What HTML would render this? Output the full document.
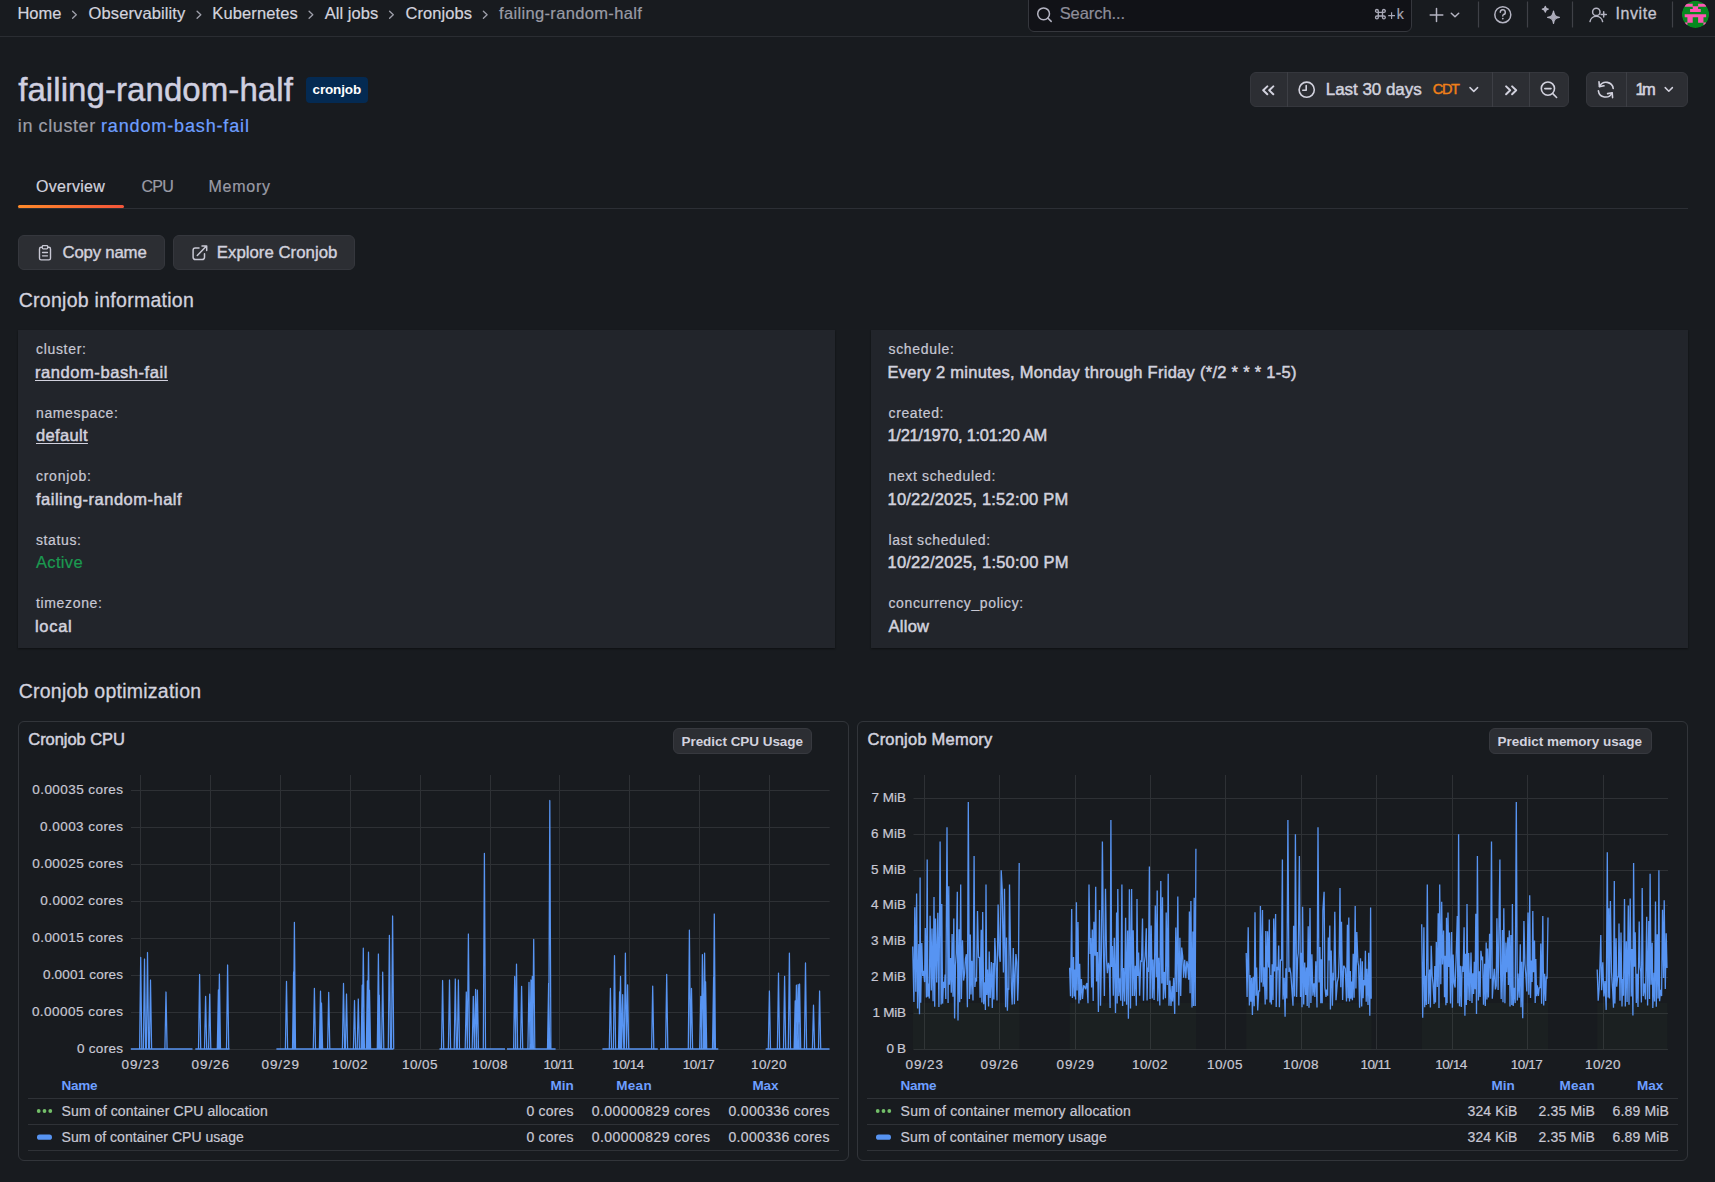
<!DOCTYPE html>
<html><head><meta charset="utf-8"><title>failing-random-half</title>
<style>
html,body{margin:0;padding:0;}
body{width:1715px;height:1182px;overflow:hidden;background:#181b1f;position:relative;font-family:"Liberation Sans",sans-serif;}
.t{position:absolute;white-space:nowrap;line-height:1;}
svg{position:absolute;left:0;top:0;}
</style></head><body>

<div style="position:absolute;left:0;top:36px;width:1715px;height:1px;background:#2a2d32"></div>
<div style="position:absolute;left:1027.5px;top:-6px;width:384px;height:37.5px;box-sizing:border-box;background:#111217;border:1px solid #35373d;border-radius:6px"></div>
<div style="position:absolute;left:306px;top:77px;width:62px;height:26px;background:#042a52;border-radius:4px"></div>
<div style="position:absolute;left:1250px;top:72px;width:319px;height:35px;box-sizing:border-box;background:#2c2e33;border:1px solid #35373d;border-radius:6px"></div>
<div style="position:absolute;left:1287px;top:72px;width:1px;height:35px;background:#3d3f45"></div>
<div style="position:absolute;left:1492px;top:72px;width:1px;height:35px;background:#3d3f45"></div>
<div style="position:absolute;left:1529px;top:72px;width:1px;height:35px;background:#3d3f45"></div>
<div style="position:absolute;left:1586px;top:72px;width:102px;height:35px;box-sizing:border-box;background:#2c2e33;border:1px solid #35373d;border-radius:6px"></div>
<div style="position:absolute;left:1626px;top:72px;width:1px;height:35px;background:#3d3f45"></div>
<div style="position:absolute;left:18px;top:208px;width:1670px;height:1px;background:#2c2f35"></div>
<div style="position:absolute;left:18px;top:204.5px;width:106px;height:3.5px;border-radius:2px;background:linear-gradient(90deg,#ff8a2a,#f4553a)"></div>
<div style="position:absolute;left:18px;top:235px;width:147px;height:35px;box-sizing:border-box;background:#2c2e33;border:1px solid #35373d;border-radius:6px"></div>
<div style="position:absolute;left:173px;top:235px;width:182px;height:35px;box-sizing:border-box;background:#2c2e33;border:1px solid #35373d;border-radius:6px"></div>
<div style="position:absolute;left:18px;top:330px;width:817px;height:318px;background:#22252b;box-shadow:0 1px 2px rgba(0,0,0,0.45)"></div>
<div style="position:absolute;left:871px;top:330px;width:817px;height:318px;background:#22252b;box-shadow:0 1px 2px rgba(0,0,0,0.45)"></div>
<div style="position:absolute;left:18px;top:721px;width:831px;height:440px;box-sizing:border-box;border:1px solid #32353a;border-radius:6px"></div>
<div style="position:absolute;left:857px;top:721px;width:831px;height:440px;box-sizing:border-box;border:1px solid #32353a;border-radius:6px"></div>
<div style="position:absolute;left:673px;top:728px;width:139px;height:26px;box-sizing:border-box;background:#2c2e33;border:1px solid #37393f;border-radius:6px"></div>
<div style="position:absolute;left:1489px;top:728px;width:163px;height:26px;box-sizing:border-box;background:#2c2e33;border:1px solid #37393f;border-radius:6px"></div>

<svg width="1715" height="1182" viewBox="0 0 1715 1182"><g stroke="#2e3135" stroke-width="1"><line x1="131" y1="790.5" x2="829.7" y2="790.5" /><line x1="131" y1="827.5" x2="829.7" y2="827.5" /><line x1="131" y1="864.5" x2="829.7" y2="864.5" /><line x1="131" y1="901.5" x2="829.7" y2="901.5" /><line x1="131" y1="938.5" x2="829.7" y2="938.5" /><line x1="131" y1="975.5" x2="829.7" y2="975.5" /><line x1="131" y1="1012.5" x2="829.7" y2="1012.5" /><line x1="131" y1="1049.5" x2="829.7" y2="1049.5" /><line x1="140.5" y1="775" x2="140.5" y2="1049.5" /><line x1="210.5" y1="775" x2="210.5" y2="1049.5" /><line x1="280.5" y1="775" x2="280.5" y2="1049.5" /><line x1="350.5" y1="775" x2="350.5" y2="1049.5" /><line x1="420.5" y1="775" x2="420.5" y2="1049.5" /><line x1="490.5" y1="775" x2="490.5" y2="1049.5" /><line x1="559.5" y1="775" x2="559.5" y2="1049.5" /><line x1="629.5" y1="775" x2="629.5" y2="1049.5" /><line x1="699.5" y1="775" x2="699.5" y2="1049.5" /><line x1="769.5" y1="775" x2="769.5" y2="1049.5" /></g><path d="M130.8,1049H192.5M195.3,1049H229.5M276.4,1049H393.5M439.5,1049H505M507,1049H555.6M602.4,1049H657.8M660,1049H718.3M765.7,1049H829.5" stroke="#5794f2" stroke-width="1.6" fill="none"/><path d="M139.6,1049L140.7,957.4L141.8,1049M143.4,1049L144.5,959L145.6,1049M146.4,1049L147.5,952.5L148.6,1049M149.4,1049L150.5,980L151.6,1049M164.9,1049L166.0,992L167.1,1049M198.5,1049L199.6,974.5L200.7,1049M204.5,1049L205.6,996.4L206.7,1049M208.6,1049L209.7,994.2L210.8,1049M217.3,1049L218.4,990L219.5,1049M218.3,1049L219.4,974.2L220.5,1049M226.5,1049L227.6,965L228.7,1049M285.4,1049L286.5,981.3L287.6,1049M292.5,1049L293.6,972L294.7,1049M293.3,1049L294.4,922.3L295.5,1049M313.3,1049L314.4,988.4L315.5,1049M319.4,1049L320.5,991.2L321.6,1049M320.4,1049L321.5,1003L322.6,1049M327.6,1049L328.7,992.3L329.8,1049M342.4,1049L343.5,983.4L344.6,1049M345.4,1049L346.5,994L347.6,1049M353.4,1049L354.5,1000.5L355.6,1049M357.2,1049L358.3,999L359.4,1049M361.1,1049L362.2,985.2L363.3,1049M362.2,1049L363.3,948.2L364.4,1049M366.3,1049L367.4,981L368.5,1049M367.4,1049L368.5,952.2L369.6,1049M368.4,1049L369.5,990L370.6,1049M377.3,1049L378.4,954L379.5,1049M378.2,1049L379.3,995L380.4,1049M381.6,1049L382.7,972.2L383.8,1049M388.3,1049L389.4,935.3L390.5,1049M391.5,1049L392.6,916L393.7,1049M441.5,1049L442.6,980.5L443.7,1049M448.4,1049L449.5,980L450.6,1049M454.2,1049L455.3,979L456.4,1049M457.3,1049L458.4,980L459.5,1049M465.2,1049L466.3,992L467.4,1049M467.3,1049L468.4,934L469.5,1049M472.2,1049L473.3,996.3L474.4,1049M474.5,1049L475.6,989.3L476.7,1049M476.3,1049L477.4,990.2L478.5,1049M483.3,1049L484.4,853.3L485.5,1049M513.6,1049L514.7,976.5L515.8,1049M515.4,1049L516.5,964.2L517.6,1049M520.5,1049L521.6,986.3L522.7,1049M527.9,1049L529.0,982.3L530.1,1049M529.9,1049L531.0,980L532.1,1049M531.2,1049L532.3,976.5L533.4,1049M532.6,1049L533.7,939.3L534.8,1049M547.5,1049L548.6,983.5L549.7,1049M548.7,1049L549.8,800.5L550.9,1049M609.3,1049L610.4,988.4L611.5,1049M613.4,1049L614.5,955.6L615.6,1049M618.5,1049L619.6,992L620.7,1049M619.4,1049L620.5,976.3L621.6,1049M621.6,1049L622.7,994.7L623.8,1049M624.3,1049L625.4,953.1L626.5,1049M626.5,1049L627.6,984.8L628.7,1049M651.6,1049L652.7,986.2L653.8,1049M665.6,1049L666.7,974.3L667.8,1049M688.3,1049L689.4,930.1L690.5,1049M690.4,1049L691.5,988.4L692.6,1049M699.7,1049L700.8,996.4L701.9,1049M701.3,1049L702.4,954.6L703.5,1049M703.5,1049L704.6,953.1L705.7,1049M704.5,1049L705.6,981.8L706.7,1049M712.5,1049L713.6,977.5L714.7,1049M713.2,1049L714.3,914L715.4,1049M768.3,1049L769.4,991L770.5,1049M777.4,1049L778.5,973.1L779.6,1049M783.5,1049L784.6,976.3L785.7,1049M788.3,1049L789.4,953.1L790.5,1049M794.1,1049L795.2,1000.8L796.3,1049M795.3,1049L796.4,985.2L797.5,1049M797.1,1049L798.2,984.5L799.3,1049M798.5,1049L799.6,984L800.7,1049M804.4,1049L805.5,962.9L806.6,1049M812.4,1049L813.5,1005.2L814.6,1049M818.5,1049L819.6,991L820.7,1049" stroke="#5794f2" stroke-width="1.25" fill="none" stroke-linejoin="round"/><g stroke="#2e3135" stroke-width="1"><line x1="913.5" y1="798.5" x2="1668" y2="798.5" /><line x1="913.5" y1="834.5" x2="1668" y2="834.5" /><line x1="913.5" y1="870.5" x2="1668" y2="870.5" /><line x1="913.5" y1="905.5" x2="1668" y2="905.5" /><line x1="913.5" y1="941.5" x2="1668" y2="941.5" /><line x1="913.5" y1="977.5" x2="1668" y2="977.5" /><line x1="913.5" y1="1013.5" x2="1668" y2="1013.5" /><line x1="913.5" y1="1049.5" x2="1668" y2="1049.5" /><line x1="924.5" y1="775" x2="924.5" y2="1049.5" /><line x1="999.5" y1="775" x2="999.5" y2="1049.5" /><line x1="1075.5" y1="775" x2="1075.5" y2="1049.5" /><line x1="1150.5" y1="775" x2="1150.5" y2="1049.5" /><line x1="1225.5" y1="775" x2="1225.5" y2="1049.5" /><line x1="1301.5" y1="775" x2="1301.5" y2="1049.5" /><line x1="1376.5" y1="775" x2="1376.5" y2="1049.5" /><line x1="1452.5" y1="775" x2="1452.5" y2="1049.5" /><line x1="1527.5" y1="775" x2="1527.5" y2="1049.5" /><line x1="1603.5" y1="775" x2="1603.5" y2="1049.5" /></g><rect x="912.7" y="1002.9" width="106.8" height="46.6" fill="#73bf69" fill-opacity="0.03"/><rect x="1069.6" y="1002.9" width="126.4" height="46.6" fill="#73bf69" fill-opacity="0.03"/><rect x="1246.2" y="1002.9" width="125.3" height="46.6" fill="#73bf69" fill-opacity="0.03"/><rect x="1421.7" y="1002.9" width="126.3" height="46.6" fill="#73bf69" fill-opacity="0.03"/><rect x="1597.2" y="1002.9" width="70.2" height="46.6" fill="#73bf69" fill-opacity="0.03"/><path d="M912.7,946.5L913.9,1001.9L914.8,907.3L915.8,991.7L916.6,893.4L917.6,1008.5L918.8,944.1L919.5,1014.2L920.1,877.4L920.7,1002.7L921.8,943.1L922.7,976.0L923.5,970.7L924.6,982.1L925.3,927.9L926.4,997.6L927.2,859.4L927.8,996.8L928.7,983.6L929.3,998.5L930.1,915.7L931.3,990.6L932.0,928.4L933.1,1001.2L934.0,897.0L934.7,1006.8L935.5,918.6L936.7,982.6L937.8,912.8L938.9,1007.0L940.1,841.5L941.2,1004.5L941.8,904.0L942.6,1003.6L943.5,981.7L944.4,987.8L945.1,974.5L945.8,999.0L947.0,827.2L948.1,1003.0L948.8,886.3L949.5,984.7L950.6,958.0L951.3,992.8L952.1,933.9L953.0,996.7L953.8,918.6L954.6,1018.6L955.5,964.9L956.3,953.5L957.3,891.7L958.0,1020.6L959.1,929.2L959.7,1002.2L960.7,884.6L961.4,999.0L962.5,940.3L963.6,980.6L964.6,973.4L965.5,958.6L966.4,954.2L967.4,1007.3L968.3,802.1L969.4,999.0L970.3,934.5L971.0,994.4L971.9,960.7L973.0,1000.5L974.1,855.9L974.9,987.0L975.6,977.9L976.5,981.6L977.5,911.1L978.5,957.8L979.4,957.0L980.1,997.8L981.2,929.7L981.9,1002.6L982.7,911.9L983.7,1004.3L984.8,982.4L985.4,1009.9L986.0,884.5L986.8,994.9L987.5,969.5L988.6,1006.5L989.2,951.4L990.2,998.1L991.4,962.0L992.3,1008.1L993.2,962.9L993.9,999.5L994.8,938.1L995.7,956.7L996.3,976.6L997.0,1000.4L998.1,904.6L999.3,955.1L1000.2,961.8L1001.2,870.2L1002.2,889.2L1003.4,972.6L1004.5,888.7L1005.6,1007.2L1006.5,937.5L1007.4,1010.7L1008.0,988.4L1008.8,989.7L1009.5,884.5L1010.6,955.0L1011.5,990.3L1012.2,1004.6L1013.3,948.1L1014.4,1004.3L1015.2,972.7L1015.9,954.0L1016.8,962.0L1017.7,1000.7L1018.4,981.0L1019.2,863.0 M1069.6,967.8L1070.5,996.3L1071.7,909.1L1072.4,998.0L1073.5,957.0L1074.2,996.6L1074.9,969.6L1075.6,999.6L1076.4,902.3L1077.1,990.4L1078.0,921.9L1078.9,1003.5L1079.7,963.7L1080.5,1000.2L1081.4,979.0L1082.5,999.0L1083.6,985.3L1084.4,986.3L1085.6,989.2L1086.3,984.5L1087.0,983.1L1088.0,1003.2L1089.0,884.5L1090.1,954.0L1090.7,938.0L1091.6,987.6L1092.3,929.4L1093.2,1001.1L1093.9,921.7L1095.0,955.8L1095.7,886.8L1096.5,981.6L1097.4,952.1L1098.4,1012.0L1099.5,910.0L1100.5,1005.8L1101.2,969.9L1102.4,841.5L1103.5,953.2L1104.4,995.9L1105.5,888.7L1106.6,960.7L1107.4,973.2L1108.4,962.8L1109.3,967.6L1110.1,1008.1L1110.9,820.0L1111.6,967.0L1112.4,946.1L1113.3,995.7L1114.3,937.8L1115.5,1013.1L1116.6,912.4L1117.2,1003.5L1117.8,888.9L1118.8,996.1L1119.7,978.4L1120.8,1000.8L1121.9,884.5L1122.6,1006.1L1123.5,968.1L1124.6,1001.6L1125.6,917.8L1126.6,1004.7L1127.6,930.5L1128.4,1018.8L1129.4,889.3L1130.5,1008.4L1131.6,888.9L1132.5,996.0L1133.2,930.3L1134.3,996.0L1135.3,965.7L1136.3,1005.7L1137.0,898.9L1137.8,976.1L1138.6,952.6L1139.6,995.7L1140.8,960.3L1141.5,962.0L1142.5,918.5L1143.5,1000.8L1144.4,962.4L1145.2,956.3L1146.3,928.3L1147.1,1000.4L1147.7,967.5L1148.4,972.0L1149.4,866.6L1150.1,998.9L1151.2,925.6L1152.3,998.6L1153.0,959.5L1154.1,1000.1L1155.3,905.6L1156.3,977.3L1157.2,890.4L1157.8,1001.2L1158.7,957.7L1159.8,1005.6L1160.8,881.0L1161.8,983.5L1162.5,897.3L1163.3,999.4L1164.3,971.9L1165.4,998.2L1166.2,912.5L1167.3,985.0L1168.2,873.8L1169.0,1005.8L1169.9,980.5L1171.0,1006.0L1172.1,986.1L1172.7,1001.4L1173.6,978.1L1174.7,1013.9L1175.8,927.4L1176.8,992.1L1177.8,896.4L1178.8,1005.5L1179.9,937.7L1180.7,996.1L1181.7,947.5L1182.7,956.3L1183.6,977.8L1184.7,959.8L1185.8,978.3L1186.8,961.2L1187.6,964.3L1188.7,979.6L1189.4,911.4L1190.1,993.2L1190.9,901.0L1192.0,1007.5L1192.9,931.5L1193.5,1005.9L1194.2,897.7L1195.2,1005.9L1195.9,848.7 M1246.2,953.0L1247.1,997.1L1248.2,927.2L1249.4,1005.5L1250.0,974.9L1250.9,1001.8L1251.6,978.0L1252.4,1014.9L1253.2,976.8L1254.2,1006.3L1255.0,912.2L1255.9,995.8L1256.6,967.4L1257.7,1010.5L1258.8,990.4L1259.6,991.5L1260.4,906.1L1261.4,982.6L1262.5,909.9L1263.1,986.7L1264.1,967.2L1265.2,1004.4L1265.8,930.9L1266.8,999.6L1267.5,931.2L1268.7,967.6L1269.3,919.6L1270.0,1002.5L1270.6,974.9L1271.4,1004.6L1272.2,964.2L1273.0,999.9L1273.7,918.6L1274.5,971.5L1275.6,914.1L1276.2,1007.1L1277.2,966.7L1278.1,970.2L1278.7,945.4L1279.4,1007.3L1280.5,959.6L1281.5,960.4L1282.4,859.4L1283.0,999.5L1284.2,977.9L1285.1,1016.7L1285.9,968.3L1286.8,998.4L1287.9,820.0L1288.9,972.1L1289.7,967.6L1290.8,973.5L1291.8,987.9L1293.0,1005.8L1293.6,925.8L1294.6,996.6L1295.4,834.3L1296.6,996.9L1297.6,958.6L1298.3,953.0L1299.4,855.9L1300.5,997.0L1301.2,952.7L1302.0,1007.3L1302.6,906.7L1303.7,1004.4L1304.7,962.4L1305.7,995.0L1306.4,967.5L1307.2,1006.1L1308.2,926.2L1309.0,1007.8L1310.0,908.0L1310.9,1003.1L1311.9,954.3L1312.9,995.8L1314.0,983.3L1314.9,996.9L1315.8,961.3L1317.0,1007.6L1318.0,827.2L1319.0,982.6L1319.9,946.9L1320.8,1003.3L1321.4,959.3L1322.2,1003.3L1322.9,910.2L1324.1,891.7L1324.9,987.4L1326.0,996.9L1326.6,989.5L1327.6,995.7L1328.3,937.5L1328.9,960.6L1329.8,925.4L1330.4,1009.5L1331.2,950.5L1332.4,1005.7L1333.2,972.8L1333.9,980.5L1334.8,911.7L1336.0,1000.3L1336.7,991.0L1337.3,982.2L1338.5,976.8L1339.2,955.4L1340.0,888.1L1340.8,987.3L1341.5,921.7L1342.6,1000.0L1343.7,965.7L1344.5,967.0L1345.3,968.7L1346.5,1001.6L1347.4,924.7L1348.1,998.2L1348.8,917.4L1349.5,1001.4L1350.3,970.9L1350.9,998.8L1351.7,981.4L1352.4,1000.2L1353.2,953.8L1354.1,997.7L1355.2,906.1L1355.9,988.6L1356.8,932.1L1357.9,961.7L1358.6,965.8L1359.6,1007.8L1360.5,958.3L1361.7,1006.4L1362.3,961.3L1363.1,998.2L1363.8,979.9L1364.7,985.5L1365.4,950.7L1366.2,1001.7L1366.9,968.7L1368.0,1005.1L1368.7,952.7L1369.8,1015.7L1370.6,907.4L1371.2,998.7 M1421.7,924.3L1422.7,1017.8L1423.9,927.2L1424.7,1007.3L1425.3,975.7L1426.3,1005.1L1427.3,884.5L1428.4,1004.0L1429.6,969.5L1430.4,1007.5L1431.2,945.8L1432.2,975.8L1433.0,983.9L1434.1,1003.9L1434.8,965.9L1435.5,1002.4L1436.3,942.1L1437.3,986.9L1438.2,913.3L1439.0,1008.0L1439.7,884.5L1440.8,984.2L1441.7,901.8L1442.5,964.6L1443.6,930.5L1444.5,997.2L1445.2,955.7L1445.9,1005.3L1446.5,917.8L1447.1,1002.9L1448.0,912.6L1448.8,967.0L1449.5,932.4L1450.5,1003.4L1451.6,931.9L1452.4,1007.8L1453.1,954.4L1454.1,982.9L1455.1,987.5L1456.2,954.6L1457.3,916.0L1457.9,1003.3L1458.6,834.3L1459.5,1006.3L1460.3,965.8L1461.3,1007.1L1462.1,966.3L1463.1,971.9L1464.1,927.3L1464.9,1015.7L1465.5,953.8L1466.4,1005.1L1467.0,903.9L1468.0,999.9L1468.7,953.0L1469.9,1001.0L1471.0,952.6L1472.0,1003.0L1472.8,973.2L1473.6,994.1L1474.3,961.8L1475.1,989.3L1475.8,913.8L1476.5,1014.0L1477.4,855.9L1478.4,1000.4L1479.3,971.3L1480.1,997.1L1480.9,950.7L1481.9,960.2L1482.6,956.5L1483.5,1004.7L1484.6,963.8L1485.3,1006.0L1486.2,942.6L1486.9,999.4L1487.6,948.5L1488.4,997.4L1489.6,933.7L1490.5,978.8L1491.5,841.5L1492.3,998.7L1493.4,979.9L1494.3,968.9L1495.4,989.4L1496.2,985.8L1496.9,918.2L1498.1,990.0L1499.1,916.1L1499.9,859.4L1500.5,967.2L1501.2,999.1L1502.4,930.1L1503.0,1002.2L1503.8,908.2L1504.9,1003.3L1505.9,942.5L1506.7,972.2L1507.8,937.3L1508.4,984.9L1509.3,930.4L1510.0,1006.5L1510.9,934.9L1511.8,1005.0L1512.4,903.9L1513.2,1006.0L1514.1,987.8L1515.2,1003.1L1516.3,802.1L1517.3,1000.4L1518.0,973.5L1519.2,997.8L1520.3,944.3L1521.0,1007.3L1521.8,961.7L1522.7,1018.2L1523.9,920.9L1524.9,964.1L1525.8,974.3L1526.8,991.4L1528.0,912.6L1528.8,994.7L1529.7,895.3L1530.5,998.1L1531.4,960.5L1532.1,981.9L1532.8,910.9L1533.5,972.2L1534.5,940.6L1535.2,1002.9L1535.8,959.0L1536.6,996.3L1537.3,985.2L1538.4,995.9L1539.2,987.4L1540.1,988.1L1540.8,943.4L1541.6,1003.8L1542.8,915.9L1543.7,1005.6L1544.6,973.7L1545.6,1001.1L1546.3,977.3L1547.1,977.7L1548.0,917.5 M1597.2,969.5L1598.2,1000.8L1599.1,988.9L1600.0,964.0L1600.8,935.1L1601.6,990.3L1602.8,962.2L1603.9,996.5L1605.0,981.1L1606.2,1009.9L1607.3,852.3L1608.1,997.4L1608.9,908.3L1609.5,998.4L1610.4,901.0L1611.5,972.1L1612.6,988.9L1613.5,1007.8L1614.3,881.0L1614.9,1003.4L1616.1,938.3L1616.7,986.8L1617.7,976.5L1618.4,977.2L1619.0,923.6L1620.0,1000.7L1621.0,932.4L1622.0,1006.6L1622.7,979.0L1623.5,995.8L1624.5,898.9L1625.3,1006.4L1626.3,941.2L1627.1,1001.9L1628.3,905.5L1629.0,1004.7L1630.2,898.5L1631.2,996.5L1632.0,949.0L1632.9,1015.6L1633.6,863.0L1634.4,966.8L1635.2,932.2L1636.3,1003.0L1637.1,973.8L1638.0,1007.0L1639.2,921.4L1640.0,966.9L1640.8,971.7L1641.4,1002.4L1642.2,888.1L1643.3,996.1L1644.4,983.6L1645.5,999.5L1646.7,916.8L1647.6,1005.5L1648.8,921.1L1649.5,999.0L1650.1,873.8L1651.1,984.8L1652.2,942.8L1652.8,1008.1L1654.0,972.8L1654.6,1001.5L1655.5,901.5L1656.3,1006.7L1657.2,934.2L1658.1,998.5L1658.9,870.2L1659.6,1001.3L1660.5,989.9L1661.6,996.1L1662.5,909.8L1663.6,977.9L1664.2,900.2L1665.3,989.0L1666.2,933.2L1667.0,968.0" stroke="#5794f2" stroke-width="1.3" fill="none" stroke-linejoin="miter" stroke-miterlimit="2"/><clipPath id="avc"><circle cx="1695.5" cy="14.4" r="13.6"/></clipPath><g clip-path="url(#avc)"><circle cx="1695.5" cy="14.4" r="13.6" fill="#06891f"/><path fill="#ff55b4" d="M1684.70,3.65h8.04v2.98h-8.04zM1698.10,3.65h8.04v2.98h-8.04zM1692.74,6.33h5.36v2.98h-5.36zM1690.06,9.01h10.72v2.98h-10.72zM1684.70,14.37h21.44v2.98h-21.44zM1687.38,17.05h5.36v2.98h-5.36zM1698.10,17.05h5.36v2.98h-5.36zM1687.38,19.73h5.36v2.98h-5.36zM1698.10,19.73h5.36v2.98h-5.36zM1684.70,22.41h2.68v2.98h-2.68zM1703.46,22.41h2.68v2.98h-2.68z"/></g><path d="M72.6,11.3 L76.3,14.8 L72.6,18.3" fill="none" stroke="#9d9ea9" stroke-width="1.35" stroke-linecap="round" stroke-linejoin="round"/><path d="M197.1,11.3 L200.8,14.8 L197.1,18.3" fill="none" stroke="#9d9ea9" stroke-width="1.35" stroke-linecap="round" stroke-linejoin="round"/><path d="M309.1,11.3 L312.8,14.8 L309.1,18.3" fill="none" stroke="#9d9ea9" stroke-width="1.35" stroke-linecap="round" stroke-linejoin="round"/><path d="M389.6,11.3 L393.3,14.8 L389.6,18.3" fill="none" stroke="#9d9ea9" stroke-width="1.35" stroke-linecap="round" stroke-linejoin="round"/><path d="M483.40000000000003,11.3 L487.1,14.8 L483.40000000000003,18.3" fill="none" stroke="#9d9ea9" stroke-width="1.35" stroke-linecap="round" stroke-linejoin="round"/><circle cx="1043.6" cy="13.8" r="5.9" fill="none" stroke="#b4b4c2" stroke-width="1.5" stroke-linecap="round" stroke-linejoin="round"/><path d="M1047.9,18.1 L1051.2,21.4" fill="none" stroke="#b4b4c2" stroke-width="1.5" stroke-linecap="round" stroke-linejoin="round"/><g fill="none" stroke="#a8a8b6" stroke-width="1.35"><path d="M1378.3,12.3 H1382.5 M1378.3,16 H1382.5 M1378.3,12.3 V16 M1382.5,12.3 V16"/><path d="M1378.3,12.3 V10.9 A1.4,1.4 0 1 0 1376.9,12.3 Z M1382.5,12.3 V10.9 A1.4,1.4 0 1 1 1383.9,12.3 Z M1378.3,16 V17.4 A1.4,1.4 0 1 1 1376.9,16 Z M1382.5,16 V17.4 A1.4,1.4 0 1 0 1383.9,16 Z"/></g><path d="M1388.2,15.6 H1395 M1391.6,12.2 V19" stroke="#a8a8b6" stroke-width="1.15"/><path d="M1436.5,8.6 V21.4 M1430.2,15 H1442.8" fill="none" stroke="#b4b4c2" stroke-width="1.5" stroke-linecap="round" stroke-linejoin="round" stroke-width="1.7"/><path d="M1451.3,13.2 L1455,16.7 L1458.7,13.2" fill="none" stroke="#b4b4c2" stroke-width="1.5" stroke-linecap="round" stroke-linejoin="round"/><line x1="1478.5" y1="1.5" x2="1478.5" y2="27.5" stroke="#3f4147" stroke-width="1.2"/><line x1="1527.5" y1="1.5" x2="1527.5" y2="27.5" stroke="#3f4147" stroke-width="1.2"/><line x1="1572.5" y1="1.5" x2="1572.5" y2="27.5" stroke="#3f4147" stroke-width="1.2"/><line x1="1672.5" y1="1.5" x2="1672.5" y2="27.5" stroke="#3f4147" stroke-width="1.2"/><circle cx="1502.8" cy="14.7" r="8" fill="none" stroke="#b4b4c2" stroke-width="1.5" stroke-linecap="round" stroke-linejoin="round"/><path d="M1500.3,12.2 A2.5,2.5 0 1 1 1503.4,14.6 C1502.9,14.8 1502.8,15.2 1502.8,16" fill="none" stroke="#b4b4c2" stroke-width="1.5" stroke-linecap="round" stroke-linejoin="round" stroke-width="1.4"/><circle cx="1502.8" cy="18.6" r="0.9" fill="#b4b4c2"/><g fill="#a8a8b6" stroke="#b4b4c2" stroke-width="1.2" stroke-linejoin="round"><path d="M1553.5,11.2 C1554.1,15.3 1555.4,16.7 1559.4,17.3 C1555.4,17.9 1554.1,19.3 1553.5,23.5 C1552.9,19.3 1551.6,17.9 1547.6,17.3 C1551.6,16.7 1552.9,15.3 1553.5,11.2Z"/><path d="M1545.3,6.3 C1545.6,8.2 1546.2,8.9 1548.3,9.2 C1546.2,9.5 1545.6,10.2 1545.3,12.2 C1545,10.2 1544.4,9.5 1542.3,9.2 C1544.4,8.9 1545,8.2 1545.3,6.3Z"/></g><circle cx="1596.3" cy="11.9" r="3.7" fill="none" stroke="#b4b4c2" stroke-width="1.5" stroke-linecap="round" stroke-linejoin="round"/><path d="M1590,21.6 A6.4,6.4 0 0 1 1602.6,21.6" fill="none" stroke="#b4b4c2" stroke-width="1.5" stroke-linecap="round" stroke-linejoin="round"/><path d="M1603.7,11.8 V17 M1601.1,14.4 H1606.3" fill="none" stroke="#b4b4c2" stroke-width="1.5" stroke-linecap="round" stroke-linejoin="round" stroke-width="1.4"/><path d="M1267.3,86.4 L1263.2,90.3 L1267.3,94.2 M1273.3,86.4 L1269.2,90.3 L1273.3,94.2" fill="none" stroke="#d2d2de" stroke-width="2" stroke-linecap="round" stroke-linejoin="round"/><circle cx="1306.7" cy="89.7" r="7.6" fill="none" stroke="#d2d2de" stroke-width="1.6"/><path d="M1306.2,85.5 V90.3 H1302.8" fill="none" stroke="#d2d2de" stroke-width="1.6" stroke-linecap="round" stroke-linejoin="round"/><path d="M1470,87.6 L1473.8,91.4 L1477.6,87.6" fill="none" stroke="#d2d2de" stroke-width="1.5" stroke-linecap="round" stroke-linejoin="round"/><path d="M1506.1,86.4 L1510.2,90.3 L1506.1,94.2 M1512.1,86.4 L1516.2,90.3 L1512.1,94.2" fill="none" stroke="#d2d2de" stroke-width="2" stroke-linecap="round" stroke-linejoin="round"/><circle cx="1547.9" cy="88.6" r="6.6" fill="none" stroke="#d2d2de" stroke-width="1.6"/><path d="M1544.8,88.6 H1551 M1552.8,93.6 L1556.6,97.5" fill="none" stroke="#d2d2de" stroke-width="1.6" stroke-linecap="round"/><path d="M1613.2,88.5 A7.2,7.2 0 0 0 1599.6,86.3 M1598.4,90.8 A7.2,7.2 0 0 0 1612,93" fill="none" stroke="#d2d2de" stroke-width="1.6" stroke-linecap="round"/><path d="M1599,81.8 L1599.4,86.6 L1604,85.8 M1612.6,97.6 L1612.2,92.8 L1607.6,93.6" fill="none" stroke="#d2d2de" stroke-width="1.6" stroke-linecap="round" stroke-linejoin="round"/><path d="M1665.2,87.6 L1668.8,91.2 L1672.4,87.6" fill="none" stroke="#d2d2de" stroke-width="1.5" stroke-linecap="round" stroke-linejoin="round"/><rect x="39.5" y="247.3" width="11" height="12.6" rx="1.6" fill="none" stroke="#c8c8d4" stroke-width="1.4"/><rect x="42.3" y="245.6" width="5.4" height="3.2" rx="0.8" fill="#2d2f34" stroke="#c8c8d4" stroke-width="1.3"/><path d="M42.5,252.5 H47.5 M42.5,255.8 H47.5" stroke="#c8c8d4" stroke-width="1.3" stroke-linecap="round"/><path d="M199,248.1 H195.3 A2.2,2.2 0 0 0 193.1,250.3 V257.3 A2.2,2.2 0 0 0 195.3,259.5 H202.3 A2.2,2.2 0 0 0 204.5,257.3 V253.8 M197.3,255.5 L206,246.6 M202,245.9 H206.7 V250.6" fill="none" stroke="#c8c8d4" stroke-width="1.5" stroke-linecap="round" stroke-linejoin="round"/><circle cx="38.7" cy="1111" r="1.9" fill="#73bf69"/><circle cx="44.5" cy="1111" r="1.9" fill="#73bf69"/><circle cx="50.3" cy="1111" r="1.9" fill="#73bf69"/><rect x="37" y="1134.6" width="15" height="5.2" rx="2.6" fill="#5794f2"/><circle cx="877.7" cy="1111" r="1.9" fill="#73bf69"/><circle cx="883.5" cy="1111" r="1.9" fill="#73bf69"/><circle cx="889.3" cy="1111" r="1.9" fill="#73bf69"/><rect x="876" y="1134.6" width="15" height="5.2" rx="2.6" fill="#5794f2"/><line x1="28" y1="1098.5" x2="839" y2="1098.5" stroke="#2f3237"/><line x1="867" y1="1098.5" x2="1678" y2="1098.5" stroke="#2f3237"/><line x1="28" y1="1124.5" x2="839" y2="1124.5" stroke="#2f3237"/><line x1="867" y1="1124.5" x2="1678" y2="1124.5" stroke="#2f3237"/><line x1="28" y1="1150.5" x2="839" y2="1150.5" stroke="#2f3237"/><line x1="867" y1="1150.5" x2="1678" y2="1150.5" stroke="#2f3237"/></svg>
<div class="t" style="left:17.40px;top:5.00px;font-size:16.5px;font-weight:400;color:#d3d3de;letter-spacing:-0.012px;-webkit-text-stroke:0.2px #d3d3de;">Home</div><div class="t" style="left:88.60px;top:5.00px;font-size:16.5px;font-weight:400;color:#d3d3de;letter-spacing:0.107px;-webkit-text-stroke:0.2px #d3d3de;">Observability</div><div class="t" style="left:212.30px;top:5.00px;font-size:16.5px;font-weight:400;color:#d3d3de;letter-spacing:0.129px;-webkit-text-stroke:0.2px #d3d3de;">Kubernetes</div><div class="t" style="left:324.80px;top:5.00px;font-size:16.5px;font-weight:400;color:#d3d3de;letter-spacing:0.037px;-webkit-text-stroke:0.2px #d3d3de;">All jobs</div><div class="t" style="left:405.40px;top:5.00px;font-size:16.5px;font-weight:400;color:#d3d3de;letter-spacing:0.074px;-webkit-text-stroke:0.2px #d3d3de;">Cronjobs</div><div class="t" style="left:499.00px;top:5.00px;font-size:16.5px;font-weight:400;color:#9a9ba6;letter-spacing:0.341px;-webkit-text-stroke:0.2px #9a9ba6;">failing-random-half</div><div class="t" style="left:1059.70px;top:5.00px;font-size:16.5px;font-weight:400;color:#8e8e9a;letter-spacing:-0.081px;-webkit-text-stroke:0.2px #8e8e9a;">Search...</div><div class="t" style="left:1396.80px;top:7.00px;font-size:14px;font-weight:400;color:#a8a8b6;-webkit-text-stroke:0.2px #a8a8b6;">k</div><div class="t" style="left:1615.40px;top:6.00px;font-size:16px;font-weight:400;color:#c4c4d0;letter-spacing:0.611px;-webkit-text-stroke:0.3px #c4c4d0;">Invite</div><div class="t" style="left:18.20px;top:73.00px;font-size:33px;font-weight:400;color:#d0d0e0;letter-spacing:0.076px;-webkit-text-stroke:0.45px #d0d0e0;">failing-random-half</div><div class="t" style="left:312.60px;top:83.00px;font-size:13.5px;font-weight:700;color:#ffffff;letter-spacing:-0.159px;">cronjob</div><div class="t" style="left:17.80px;top:117.00px;font-size:18px;font-weight:400;color:#9d9ea8;letter-spacing:0.596px;-webkit-text-stroke:0.2px #9d9ea8;">in cluster</div><div class="t" style="left:100.90px;top:117.00px;font-size:18px;font-weight:400;color:#6e9fff;letter-spacing:0.869px;-webkit-text-stroke:0.2px #6e9fff;">random-bash-fail</div><div class="t" style="left:1325.80px;top:81.00px;font-size:17px;font-weight:400;color:#d2d2de;letter-spacing:-0.045px;-webkit-text-stroke:0.45px #d2d2de;">Last 30 days</div><div class="t" style="left:1432.80px;top:82.00px;font-size:14.5px;font-weight:400;color:#f08019;letter-spacing:-1.371px;-webkit-text-stroke:0.45px #f08019;">CDT</div><div class="t" style="left:1635.60px;top:81.00px;font-size:16.5px;font-weight:400;color:#d2d2de;-webkit-text-stroke:0.55px #d2d2de;">1</div><div class="t" style="left:1642.00px;top:81.00px;font-size:16.5px;font-weight:400;color:#d2d2de;-webkit-text-stroke:0.55px #d2d2de;">m</div><div class="t" style="left:36.10px;top:179.00px;font-size:16px;font-weight:400;color:#d2d2de;letter-spacing:0.282px;-webkit-text-stroke:0.2px #d2d2de;">Overview</div><div class="t" style="left:141.40px;top:179.00px;font-size:16px;font-weight:400;color:#9a9ba6;letter-spacing:-0.663px;-webkit-text-stroke:0.2px #9a9ba6;">CPU</div><div class="t" style="left:208.50px;top:179.00px;font-size:16px;font-weight:400;color:#9a9ba6;letter-spacing:0.744px;-webkit-text-stroke:0.2px #9a9ba6;">Memory</div><div class="t" style="left:62.50px;top:245.00px;font-size:16.8px;font-weight:400;color:#d2d2de;letter-spacing:-0.198px;-webkit-text-stroke:0.4px #d2d2de;">Copy name</div><div class="t" style="left:216.80px;top:245.00px;font-size:16.8px;font-weight:400;color:#d2d2de;letter-spacing:0.015px;-webkit-text-stroke:0.4px #d2d2de;">Explore Cronjob</div><div class="t" style="left:18.70px;top:291.00px;font-size:19.5px;font-weight:400;color:#d2d2de;letter-spacing:0.277px;-webkit-text-stroke:0.3px #d2d2de;">Cronjob information</div><div class="t" style="left:18.70px;top:682.00px;font-size:19.5px;font-weight:400;color:#d2d2de;letter-spacing:0.247px;-webkit-text-stroke:0.3px #d2d2de;">Cronjob optimization</div><div class="t" style="left:36.00px;top:342.00px;font-size:14px;font-weight:400;color:#c8c8d4;letter-spacing:0.681px;-webkit-text-stroke:0.2px #c8c8d4;">cluster:</div><div class="t" style="left:36.00px;top:406.00px;font-size:14px;font-weight:400;color:#c8c8d4;letter-spacing:0.625px;-webkit-text-stroke:0.2px #c8c8d4;">namespace:</div><div class="t" style="left:36.00px;top:469.00px;font-size:14px;font-weight:400;color:#c8c8d4;letter-spacing:0.726px;-webkit-text-stroke:0.2px #c8c8d4;">cronjob:</div><div class="t" style="left:36.00px;top:533.00px;font-size:14px;font-weight:400;color:#c8c8d4;letter-spacing:0.608px;-webkit-text-stroke:0.2px #c8c8d4;">status:</div><div class="t" style="left:36.00px;top:596.00px;font-size:14px;font-weight:400;color:#c8c8d4;letter-spacing:0.649px;-webkit-text-stroke:0.2px #c8c8d4;">timezone:</div><div class="t" style="left:35.00px;top:364.00px;font-size:16.5px;font-weight:400;color:#d2d2de;letter-spacing:0.571px;text-decoration:underline;text-underline-offset:2px;text-decoration-thickness:1px;-webkit-text-stroke:0.5px #d2d2de;">random-bash-fail</div><div class="t" style="left:36.00px;top:427.00px;font-size:16.5px;font-weight:400;color:#d2d2de;letter-spacing:0.341px;text-decoration:underline;text-underline-offset:2px;text-decoration-thickness:1px;-webkit-text-stroke:0.5px #d2d2de;">default</div><div class="t" style="left:36.00px;top:491.00px;font-size:16.5px;font-weight:400;color:#d2d2de;letter-spacing:0.496px;-webkit-text-stroke:0.5px #d2d2de;">failing-random-half</div><div class="t" style="left:36.00px;top:554.00px;font-size:16.5px;font-weight:400;color:#1b9a50;letter-spacing:0.329px;-webkit-text-stroke:0.2px #1b9a50;">Active</div><div class="t" style="left:35.00px;top:618.00px;font-size:16.5px;font-weight:400;color:#d2d2de;letter-spacing:0.683px;-webkit-text-stroke:0.5px #d2d2de;">local</div><div class="t" style="left:888.50px;top:342.00px;font-size:14px;font-weight:400;color:#c8c8d4;letter-spacing:0.670px;-webkit-text-stroke:0.2px #c8c8d4;">schedule:</div><div class="t" style="left:888.50px;top:406.00px;font-size:14px;font-weight:400;color:#c8c8d4;letter-spacing:0.629px;-webkit-text-stroke:0.2px #c8c8d4;">created:</div><div class="t" style="left:888.50px;top:469.00px;font-size:14px;font-weight:400;color:#c8c8d4;letter-spacing:0.630px;-webkit-text-stroke:0.2px #c8c8d4;">next scheduled:</div><div class="t" style="left:888.50px;top:533.00px;font-size:14px;font-weight:400;color:#c8c8d4;letter-spacing:0.586px;-webkit-text-stroke:0.2px #c8c8d4;">last scheduled:</div><div class="t" style="left:888.50px;top:596.00px;font-size:14px;font-weight:400;color:#c8c8d4;letter-spacing:0.609px;-webkit-text-stroke:0.2px #c8c8d4;">concurrency_policy:</div><div class="t" style="left:887.50px;top:364.00px;font-size:16.5px;font-weight:400;color:#d2d2de;letter-spacing:0.275px;-webkit-text-stroke:0.5px #d2d2de;">Every 2 minutes, Monday through Friday (*/2 * * * 1-5)</div><div class="t" style="left:887.50px;top:427.00px;font-size:16.5px;font-weight:400;color:#d2d2de;letter-spacing:-0.311px;-webkit-text-stroke:0.5px #d2d2de;">1/21/1970, 1:01:20 AM</div><div class="t" style="left:887.50px;top:491.00px;font-size:16.5px;font-weight:400;color:#d2d2de;letter-spacing:0.220px;-webkit-text-stroke:0.5px #d2d2de;">10/22/2025, 1:52:00 PM</div><div class="t" style="left:887.50px;top:554.00px;font-size:16.5px;font-weight:400;color:#d2d2de;letter-spacing:0.229px;-webkit-text-stroke:0.5px #d2d2de;">10/22/2025, 1:50:00 PM</div><div class="t" style="left:888.50px;top:618.00px;font-size:16.5px;font-weight:400;color:#d2d2de;letter-spacing:0.272px;-webkit-text-stroke:0.5px #d2d2de;">Allow</div><div class="t" style="left:28.30px;top:731.00px;font-size:16.5px;font-weight:400;color:#d2d2de;letter-spacing:-0.059px;-webkit-text-stroke:0.5px #d2d2de;">Cronjob CPU</div><div class="t" style="left:867.50px;top:731.00px;font-size:16.5px;font-weight:400;color:#d2d2de;letter-spacing:0.215px;-webkit-text-stroke:0.5px #d2d2de;">Cronjob Memory</div><div class="t" style="left:681.50px;top:735.00px;font-size:13.5px;font-weight:700;color:#d2d2de;letter-spacing:-0.049px;">Predict CPU Usage</div><div class="t" style="left:1497.50px;top:735.00px;font-size:13.5px;font-weight:700;color:#d2d2de;letter-spacing:-0.016px;">Predict memory usage</div><div class="t" style="left:32.30px;top:783.00px;font-size:13.5px;font-weight:400;color:#c8c8d4;letter-spacing:0.432px;-webkit-text-stroke:0.2px #c8c8d4;">0.00035 cores</div><div class="t" style="left:40.10px;top:820.00px;font-size:13.5px;font-weight:400;color:#c8c8d4;letter-spacing:0.445px;-webkit-text-stroke:0.2px #c8c8d4;">0.0003 cores</div><div class="t" style="left:32.30px;top:857.00px;font-size:13.5px;font-weight:400;color:#c8c8d4;letter-spacing:0.432px;-webkit-text-stroke:0.2px #c8c8d4;">0.00025 cores</div><div class="t" style="left:40.30px;top:894.00px;font-size:13.5px;font-weight:400;color:#c8c8d4;letter-spacing:0.427px;-webkit-text-stroke:0.2px #c8c8d4;">0.0002 cores</div><div class="t" style="left:32.30px;top:931.00px;font-size:13.5px;font-weight:400;color:#c8c8d4;letter-spacing:0.432px;-webkit-text-stroke:0.2px #c8c8d4;">0.00015 cores</div><div class="t" style="left:43.00px;top:968.00px;font-size:13.5px;font-weight:400;color:#c8c8d4;letter-spacing:0.182px;-webkit-text-stroke:0.2px #c8c8d4;">0.0001 cores</div><div class="t" style="left:31.90px;top:1005.00px;font-size:13.5px;font-weight:400;color:#c8c8d4;letter-spacing:0.466px;-webkit-text-stroke:0.2px #c8c8d4;">0.00005 cores</div><div class="t" style="left:76.90px;top:1042.00px;font-size:13.5px;font-weight:400;color:#c8c8d4;letter-spacing:0.313px;-webkit-text-stroke:0.2px #c8c8d4;">0 cores</div><div class="t" style="left:121.60px;top:1058.00px;font-size:13.5px;font-weight:400;color:#c8c8d4;letter-spacing:0.881px;-webkit-text-stroke:0.2px #c8c8d4;">09/23</div><div class="t" style="left:191.50px;top:1058.00px;font-size:13.5px;font-weight:400;color:#c8c8d4;letter-spacing:0.931px;-webkit-text-stroke:0.2px #c8c8d4;">09/26</div><div class="t" style="left:261.60px;top:1058.00px;font-size:13.5px;font-weight:400;color:#c8c8d4;letter-spacing:0.881px;-webkit-text-stroke:0.2px #c8c8d4;">09/29</div><div class="t" style="left:332.10px;top:1058.00px;font-size:13.5px;font-weight:400;color:#c8c8d4;letter-spacing:0.381px;-webkit-text-stroke:0.2px #c8c8d4;">10/02</div><div class="t" style="left:402.05px;top:1058.00px;font-size:13.5px;font-weight:400;color:#c8c8d4;letter-spacing:0.406px;-webkit-text-stroke:0.2px #c8c8d4;">10/05</div><div class="t" style="left:472.10px;top:1058.00px;font-size:13.5px;font-weight:400;color:#c8c8d4;letter-spacing:0.381px;-webkit-text-stroke:0.2px #c8c8d4;">10/08</div><div class="t" style="left:543.60px;top:1058.00px;font-size:13.5px;font-weight:400;color:#c8c8d4;letter-spacing:-0.618px;-webkit-text-stroke:0.2px #c8c8d4;">10/11</div><div class="t" style="left:612.20px;top:1058.00px;font-size:13.5px;font-weight:400;color:#c8c8d4;letter-spacing:-0.419px;-webkit-text-stroke:0.2px #c8c8d4;">10/14</div><div class="t" style="left:682.75px;top:1058.00px;font-size:13.5px;font-weight:400;color:#c8c8d4;letter-spacing:-0.444px;-webkit-text-stroke:0.2px #c8c8d4;">10/17</div><div class="t" style="left:750.90px;top:1058.00px;font-size:13.5px;font-weight:400;color:#c8c8d4;letter-spacing:0.481px;-webkit-text-stroke:0.2px #c8c8d4;">10/20</div><div class="t" style="left:871.60px;top:791.00px;font-size:13.5px;font-weight:400;color:#c8c8d4;-webkit-text-stroke:0.2px #c8c8d4;">7 MiB</div><div class="t" style="left:871.10px;top:827.00px;font-size:13.5px;font-weight:400;color:#c8c8d4;letter-spacing:0.124px;-webkit-text-stroke:0.2px #c8c8d4;">6 MiB</div><div class="t" style="left:871.10px;top:863.00px;font-size:13.5px;font-weight:400;color:#c8c8d4;letter-spacing:0.124px;-webkit-text-stroke:0.2px #c8c8d4;">5 MiB</div><div class="t" style="left:871.10px;top:898.00px;font-size:13.5px;font-weight:400;color:#c8c8d4;letter-spacing:0.124px;-webkit-text-stroke:0.2px #c8c8d4;">4 MiB</div><div class="t" style="left:871.10px;top:934.00px;font-size:13.5px;font-weight:400;color:#c8c8d4;letter-spacing:0.124px;-webkit-text-stroke:0.2px #c8c8d4;">3 MiB</div><div class="t" style="left:871.10px;top:970.00px;font-size:13.5px;font-weight:400;color:#c8c8d4;letter-spacing:0.124px;-webkit-text-stroke:0.2px #c8c8d4;">2 MiB</div><div class="t" style="left:872.60px;top:1006.00px;font-size:13.5px;font-weight:400;color:#c8c8d4;letter-spacing:-0.251px;-webkit-text-stroke:0.2px #c8c8d4;">1 MiB</div><div class="t" style="left:886.50px;top:1042.00px;font-size:13.5px;font-weight:400;color:#c8c8d4;letter-spacing:-0.329px;-webkit-text-stroke:0.2px #c8c8d4;">0 B</div><div class="t" style="left:905.60px;top:1058.00px;font-size:13.5px;font-weight:400;color:#c8c8d4;letter-spacing:0.881px;-webkit-text-stroke:0.2px #c8c8d4;">09/23</div><div class="t" style="left:980.50px;top:1058.00px;font-size:13.5px;font-weight:400;color:#c8c8d4;letter-spacing:0.931px;-webkit-text-stroke:0.2px #c8c8d4;">09/26</div><div class="t" style="left:1056.60px;top:1058.00px;font-size:13.5px;font-weight:400;color:#c8c8d4;letter-spacing:0.881px;-webkit-text-stroke:0.2px #c8c8d4;">09/29</div><div class="t" style="left:1132.10px;top:1058.00px;font-size:13.5px;font-weight:400;color:#c8c8d4;letter-spacing:0.381px;-webkit-text-stroke:0.2px #c8c8d4;">10/02</div><div class="t" style="left:1207.05px;top:1058.00px;font-size:13.5px;font-weight:400;color:#c8c8d4;letter-spacing:0.406px;-webkit-text-stroke:0.2px #c8c8d4;">10/05</div><div class="t" style="left:1283.10px;top:1058.00px;font-size:13.5px;font-weight:400;color:#c8c8d4;letter-spacing:0.381px;-webkit-text-stroke:0.2px #c8c8d4;">10/08</div><div class="t" style="left:1360.60px;top:1058.00px;font-size:13.5px;font-weight:400;color:#c8c8d4;letter-spacing:-0.618px;-webkit-text-stroke:0.2px #c8c8d4;">10/11</div><div class="t" style="left:1435.20px;top:1058.00px;font-size:13.5px;font-weight:400;color:#c8c8d4;letter-spacing:-0.419px;-webkit-text-stroke:0.2px #c8c8d4;">10/14</div><div class="t" style="left:1510.75px;top:1058.00px;font-size:13.5px;font-weight:400;color:#c8c8d4;letter-spacing:-0.444px;-webkit-text-stroke:0.2px #c8c8d4;">10/17</div><div class="t" style="left:1584.90px;top:1058.00px;font-size:13.5px;font-weight:400;color:#c8c8d4;letter-spacing:0.481px;-webkit-text-stroke:0.2px #c8c8d4;">10/20</div><div class="t" style="left:61.60px;top:1079.00px;font-size:13.5px;font-weight:700;color:#6e9fff;letter-spacing:-0.287px;">Name</div><div class="t" style="left:550.40px;top:1079.00px;font-size:13.5px;font-weight:700;color:#6e9fff;letter-spacing:0.052px;">Min</div><div class="t" style="left:616.20px;top:1079.00px;font-size:13.5px;font-weight:700;color:#6e9fff;letter-spacing:0.313px;">Mean</div><div class="t" style="left:752.50px;top:1079.00px;font-size:13.5px;font-weight:700;color:#6e9fff;letter-spacing:-0.127px;">Max</div><div class="t" style="left:61.60px;top:1104.00px;font-size:14px;font-weight:400;color:#c8c8d4;letter-spacing:0.125px;-webkit-text-stroke:0.2px #c8c8d4;">Sum of container CPU allocation</div><div class="t" style="left:61.60px;top:1130.00px;font-size:14px;font-weight:400;color:#c8c8d4;letter-spacing:0.035px;-webkit-text-stroke:0.2px #c8c8d4;">Sum of container CPU usage</div><div class="t" style="left:526.40px;top:1104.00px;font-size:14px;font-weight:400;color:#c8c8d4;letter-spacing:0.198px;-webkit-text-stroke:0.2px #c8c8d4;">0 cores</div><div class="t" style="left:591.80px;top:1104.00px;font-size:14px;font-weight:400;color:#c8c8d4;letter-spacing:0.414px;-webkit-text-stroke:0.2px #c8c8d4;">0.00000829 cores</div><div class="t" style="left:728.40px;top:1104.00px;font-size:14px;font-weight:400;color:#c8c8d4;letter-spacing:0.345px;-webkit-text-stroke:0.2px #c8c8d4;">0.000336 cores</div><div class="t" style="left:526.40px;top:1130.00px;font-size:14px;font-weight:400;color:#c8c8d4;letter-spacing:0.198px;-webkit-text-stroke:0.2px #c8c8d4;">0 cores</div><div class="t" style="left:591.80px;top:1130.00px;font-size:14px;font-weight:400;color:#c8c8d4;letter-spacing:0.414px;-webkit-text-stroke:0.2px #c8c8d4;">0.00000829 cores</div><div class="t" style="left:728.40px;top:1130.00px;font-size:14px;font-weight:400;color:#c8c8d4;letter-spacing:0.345px;-webkit-text-stroke:0.2px #c8c8d4;">0.000336 cores</div><div class="t" style="left:900.60px;top:1079.00px;font-size:13.5px;font-weight:700;color:#6e9fff;letter-spacing:-0.287px;">Name</div><div class="t" style="left:1491.40px;top:1079.00px;font-size:13.5px;font-weight:700;color:#6e9fff;letter-spacing:0.052px;">Min</div><div class="t" style="left:1559.40px;top:1079.00px;font-size:13.5px;font-weight:700;color:#6e9fff;letter-spacing:0.279px;">Mean</div><div class="t" style="left:1637.00px;top:1079.00px;font-size:13.5px;font-weight:700;color:#6e9fff;letter-spacing:0.023px;">Max</div><div class="t" style="left:900.60px;top:1104.00px;font-size:14px;font-weight:400;color:#c8c8d4;letter-spacing:0.208px;-webkit-text-stroke:0.2px #c8c8d4;">Sum of container memory allocation</div><div class="t" style="left:900.60px;top:1130.00px;font-size:14px;font-weight:400;color:#c8c8d4;letter-spacing:0.138px;-webkit-text-stroke:0.2px #c8c8d4;">Sum of container memory usage</div><div class="t" style="left:1467.50px;top:1104.00px;font-size:14px;font-weight:400;color:#c8c8d4;letter-spacing:0.117px;-webkit-text-stroke:0.2px #c8c8d4;">324 KiB</div><div class="t" style="left:1538.60px;top:1104.00px;font-size:14px;font-weight:400;color:#c8c8d4;letter-spacing:0.141px;-webkit-text-stroke:0.2px #c8c8d4;">2.35 MiB</div><div class="t" style="left:1612.60px;top:1104.00px;font-size:14px;font-weight:400;color:#c8c8d4;letter-spacing:0.141px;-webkit-text-stroke:0.2px #c8c8d4;">6.89 MiB</div><div class="t" style="left:1467.50px;top:1130.00px;font-size:14px;font-weight:400;color:#c8c8d4;letter-spacing:0.117px;-webkit-text-stroke:0.2px #c8c8d4;">324 KiB</div><div class="t" style="left:1538.60px;top:1130.00px;font-size:14px;font-weight:400;color:#c8c8d4;letter-spacing:0.141px;-webkit-text-stroke:0.2px #c8c8d4;">2.35 MiB</div><div class="t" style="left:1612.60px;top:1130.00px;font-size:14px;font-weight:400;color:#c8c8d4;letter-spacing:0.141px;-webkit-text-stroke:0.2px #c8c8d4;">6.89 MiB</div>
</body></html>
